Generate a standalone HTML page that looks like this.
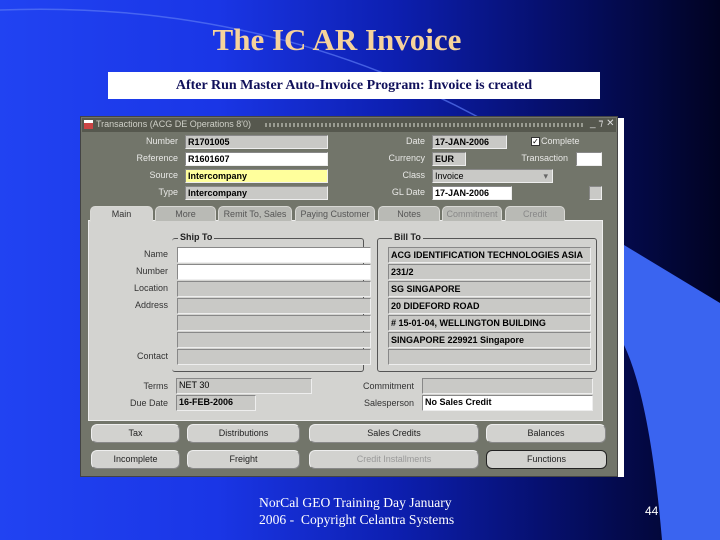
<!DOCTYPE html>
<html><head><meta charset="utf-8"><style>
*{margin:0;padding:0;box-sizing:border-box}
body{width:720px;height:540px;overflow:hidden;position:relative;background:linear-gradient(90deg,#2143f2 0%,#1a36e6 30%,#0d1fb0 55%,#061070 75%,#010322 100%);font-family:"Liberation Sans",sans-serif}
.a{position:absolute}
.t{font-family:"Liberation Serif",serif}
.lbl{position:absolute;font-size:9px;color:#e8e8e6;text-align:right;white-space:nowrap}
.lbl2{position:absolute;font-size:9px;color:#333;text-align:right;white-space:nowrap}
.f{position:absolute;height:14px;background:#c9c9c6;border-top:1px solid #888;border-left:1px solid #888;border-bottom:1px solid #eee;border-right:1px solid #eee;font-size:9px;font-weight:bold;color:#000;padding-left:2px;line-height:12px;white-space:nowrap;overflow:hidden}
.w{background:#fff}
.y{background:#ffff9c}
.tab{position:absolute;top:206px;height:15px;background:#b9bab5;border-radius:5px 5px 0 0;font-size:9px;color:#555;text-align:center;line-height:15px;border:1px solid #d8d8d4;border-bottom:none}
.b{position:absolute;height:19px;background:#d2d2cf;border:1px solid #eee;border-right-color:#888;border-bottom-color:#888;border-radius:6px;font-size:9px;color:#222;text-align:center;line-height:17px}
</style></head><body>
<svg class="a" style="left:0;top:0" width="720" height="540">
<path d="M0,10 Q260,0 480,118" fill="none" stroke="#5a78f4" stroke-width="1.5" opacity=".7"/>
<path d="M624,245 L720,303 L720,540 L662,540 Q650,400 624,345 Z" fill="#3a64f0"/>
</svg>
<div class="a t" style="left:137px;top:22px;width:400px;text-align:center;font-size:31px;font-weight:bold;color:#f6d39b">The IC AR Invoice</div>
<div class="a t" style="left:108px;top:72px;width:492px;height:27px;background:#fff;text-align:center;font-size:14px;font-weight:bold;color:#10105a;line-height:27px">After Run Master Auto-Invoice Program: Invoice is created</div>

<div class="a" style="left:617px;top:118px;width:7px;height:359px;background:#fff"></div>
<div class="a" style="left:80px;top:116px;width:538px;height:361px;background:#72756a;border:1px solid #444"></div>
<div class="a" style="left:82px;top:118px;width:534px;height:14px;background:#56584e"></div>
<div class="a" style="left:84px;top:120px;width:9px;height:9px;background:#c44;border-top:3px solid #fff"></div>
<div class="a" style="left:96px;top:119px;font-size:9px;color:#cfd0c8">Transactions (ACG DE Operations 8'0)</div>
<div class="a" style="left:265px;top:123px;width:320px;height:4px;background:repeating-linear-gradient(90deg,#9a9c92 0 2px,transparent 2px 4px)"></div>
<div class="a" style="left:590px;top:118px;font-size:10px;color:#ddd">_ ⁊ ✕</div>

<div class="lbl" style="left:100px;width:78px;top:136px">Number</div>
<div class="f" style="left:185px;top:135px;width:143px">R1701005</div>
<div class="lbl" style="left:100px;width:78px;top:153px">Reference</div>
<div class="f w" style="left:185px;top:152px;width:143px">R1601607</div>
<div class="lbl" style="left:100px;width:78px;top:170px">Source</div>
<div class="f y" style="left:185px;top:169px;width:143px">Intercompany</div>
<div class="lbl" style="left:100px;width:78px;top:187px">Type</div>
<div class="f" style="left:185px;top:186px;width:143px">Intercompany</div>

<div class="lbl" style="left:350px;width:75px;top:136px">Date</div>
<div class="f" style="left:432px;top:135px;width:75px">17-JAN-2006</div>
<div class="lbl" style="left:350px;width:75px;top:153px">Currency</div>
<div class="f" style="left:432px;top:152px;width:34px">EUR</div>
<div class="lbl" style="left:350px;width:75px;top:170px">Class</div>
<div class="f" style="left:432px;top:169px;width:121px;font-weight:normal">Invoice<span style="position:absolute;right:4px;color:#666">▾</span></div>
<div class="lbl" style="left:350px;width:75px;top:187px">GL Date</div>
<div class="f w" style="left:432px;top:186px;width:80px">17-JAN-2006</div>
<div class="a" style="left:531px;top:137px;width:9px;height:9px;background:#fff;border:1px solid #333;font-size:8px;line-height:7px;text-align:center">✓</div>
<div class="lbl" style="left:541px;top:136px;text-align:left">Complete</div>
<div class="lbl" style="left:500px;width:68px;top:153px">Transaction</div>
<div class="f w" style="left:576px;top:152px;width:26px"></div>
<div class="f" style="left:589px;top:186px;width:13px"></div>

<div class="a" style="left:88px;top:220px;width:515px;height:201px;background:#d3d3d0;border:1px solid #eee"></div>
<div class="tab" style="left:90px;width:63px;background:#d3d3d0;color:#333;height:16px">Main</div>
<div class="tab" style="left:155px;width:61px">More</div>
<div class="tab" style="left:218px;width:74px">Remit To, Sales</div>
<div class="tab" style="left:295px;width:80px">Paying Customer</div>
<div class="tab" style="left:378px;width:62px">Notes</div>
<div class="tab" style="left:442px;width:60px;color:#888">Commitment</div>
<div class="tab" style="left:505px;width:60px;color:#888">Credit</div>

<div class="a" style="left:172px;top:238px;width:192px;height:134px;border:1px solid #555;border-radius:3px;border-left:none"></div>
<div class="a" style="left:377px;top:238px;width:220px;height:134px;border:1px solid #555;border-radius:3px"></div>
<div class="a" style="left:178px;top:232px;font-size:9px;font-weight:bold;background:#d3d3d0;padding:0 2px;color:#222">Ship To</div>
<div class="a" style="left:392px;top:232px;font-size:9px;font-weight:bold;background:#d3d3d0;padding:0 2px;color:#222">Bill To</div>

<div class="lbl2" style="left:100px;width:68px;top:249px">Name</div>
<div class="lbl2" style="left:100px;width:68px;top:266px">Number</div>
<div class="lbl2" style="left:100px;width:68px;top:283px">Location</div>
<div class="lbl2" style="left:100px;width:68px;top:300px">Address</div>
<div class="lbl2" style="left:100px;width:68px;top:351px">Contact</div>
<div class="f w" style="left:177px;top:247px;width:194px;height:16px"></div>
<div class="f w" style="left:177px;top:264px;width:194px;height:16px"></div>
<div class="f" style="left:177px;top:281px;width:194px;height:16px"></div>
<div class="f" style="left:177px;top:298px;width:194px;height:16px"></div>
<div class="f" style="left:177px;top:315px;width:194px;height:16px"></div>
<div class="f" style="left:177px;top:332px;width:194px;height:16px"></div>
<div class="f" style="left:177px;top:349px;width:194px;height:16px"></div>
<div class="f" style="left:388px;top:247px;width:203px;height:16px;line-height:14px">ACG IDENTIFICATION TECHNOLOGIES ASIA</div>
<div class="f" style="left:388px;top:264px;width:203px;height:16px;line-height:14px">231/2</div>
<div class="f" style="left:388px;top:281px;width:203px;height:16px;line-height:14px">SG SINGAPORE</div>
<div class="f" style="left:388px;top:298px;width:203px;height:16px;line-height:14px">20 DIDEFORD ROAD</div>
<div class="f" style="left:388px;top:315px;width:203px;height:16px;line-height:14px"># 15-01-04, WELLINGTON BUILDING</div>
<div class="f" style="left:388px;top:332px;width:203px;height:16px;line-height:14px">SINGAPORE 229921 Singapore</div>
<div class="f" style="left:388px;top:349px;width:203px;height:16px"></div>

<div class="lbl2" style="left:100px;width:68px;top:381px">Terms</div>
<div class="f" style="left:176px;top:378px;width:136px;height:16px;font-weight:normal">NET 30</div>
<div class="lbl2" style="left:100px;width:68px;top:398px">Due Date</div>
<div class="f" style="left:176px;top:395px;width:80px;height:16px">16-FEB-2006</div>
<div class="lbl2" style="left:340px;width:74px;top:381px">Commitment</div>
<div class="f" style="left:422px;top:378px;width:171px;height:16px"></div>
<div class="lbl2" style="left:340px;width:74px;top:398px">Salesperson</div>
<div class="f w" style="left:422px;top:395px;width:171px;height:16px">No Sales Credit</div>

<div class="b" style="left:91px;top:424px;width:89px">Tax</div>
<div class="b" style="left:187px;top:424px;width:113px">Distributions</div>
<div class="b" style="left:309px;top:424px;width:170px">Sales Credits</div>
<div class="b" style="left:486px;top:424px;width:120px">Balances</div>
<div class="b" style="left:91px;top:450px;width:89px">Incomplete</div>
<div class="b" style="left:187px;top:450px;width:113px">Freight</div>
<div class="b" style="left:309px;top:450px;width:170px;color:#999">Credit Installments</div>
<div class="b" style="left:486px;top:450px;width:121px;border:1px solid #222">Functions</div>

<div class="a t" style="left:259px;top:494px;font-size:13.6px;color:#fff;line-height:17px">NorCal GEO Training Day January<br>2006 -&nbsp; Copyright Celantra Systems</div>
<div class="a" style="left:645px;top:504px;font-size:12px;color:#fff">44</div>
</body></html>
